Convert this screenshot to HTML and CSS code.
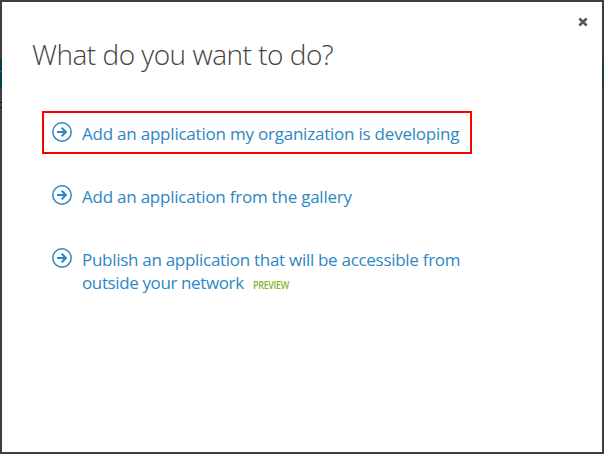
FILE: index.html
```
<!DOCTYPE html>
<html lang="en">
<head>
<meta charset="utf-8">
<title>What do you want to do?</title>
<link rel="stylesheet" href="styles.css">
</head>
<body>
<svg class="symbols" aria-hidden="true">
  <symbol id="go" viewBox="0 0 20 20">
    <circle cx="10" cy="10" r="9.2" fill="none" stroke="currentColor" stroke-width="1.5"/>
    <path d="M5 10h9M9.7 5.8l4.2 4.2-4.2 4.2" fill="none" stroke="currentColor" stroke-width="2.1"/>
  </symbol>
</svg>
<main class="backdrop">
  <section class="dialog" role="dialog">
    <button class="close" aria-label="Close">
      <svg viewBox="0 0 10 10"><path d="M1.3 1.5l7.4 7M8.7 1.5l-7.4 7" fill="none" stroke="currentColor" stroke-width="2.5"/></svg>
    </button>
    <h1 class="title">What do you want to do?</h1>
    <nav class="options">
      <a class="option highlighted"><svg class="icon"><use href="#go"/></svg><span class="label dev">Add an application my organization is developing</span></a>
      <a class="option"><svg class="icon"><use href="#go"/></svg><span class="label gallery">Add an application from the gallery</span></a>
      <a class="option"><svg class="icon"><use href="#go"/></svg><span class="label"><span class="publish">Publish an application that will be accessible from</span><br><span class="outside">outside your network</span><span class="badge">PREVIEW</span></span></a>
    </nav>
  </section>
</main>
</body>
</html>
```
FILE: styles.css
```
* { box-sizing: border-box; }
body { margin: 0; font-family: "Open Sans", "Noto Sans", sans-serif; }
.symbols { display: none; }
.backdrop {
  width: 604px;
  height: 454px;
  padding: 2px;
  background:
    linear-gradient(transparent 58px, #0c3d52 58px 71px, #2a6278 71px 72px, #0c3d52 72px 88px, transparent 88px 102px, #111 102px 103px, transparent 103px 107px, #111 107px 108px, transparent 108px) left / 2px 100% no-repeat,
    linear-gradient(#403f40 0 58px, #203d45 58px 88px, #403f40 88px);
}
.dialog { position: relative; height: 450px; background: #fff; padding: 30px 40px 0; }
.close {
  position: absolute;
  top: 15px;
  right: 14px;
  width: 10px;
  height: 10px;
  padding: 0;
  border: 0;
  background: none;
  color: #555;
}
.close svg { display: block; width: 10px; height: 10px; }
.title {
  margin: 0 0 0 -10px;
  height: 79px;
  font-size: 28px;
  line-height: 44px;
  font-weight: 300;
  letter-spacing: -0.5px;
  color: #444;
  white-space: nowrap;
}
.options { display: flex; flex-direction: column; gap: 20px; color: #2d87c3; }
.option {
  display: flex;
  width: 430px;
  min-height: 43px;
  padding: 9px 8px 7px;
  gap: 10px;
  border: 2px solid transparent;
}
.highlighted { border-color: #f00; }
.icon { flex: none; width: 20px; height: 20px; }
.label { font-size: 17px; line-height: 23px; white-space: nowrap; }
.dev { letter-spacing: -0.22px; }
.gallery { letter-spacing: -0.23px; }
.publish { letter-spacing: -0.29px; }
.outside { letter-spacing: -0.38px; }
.badge {
  display: inline-block;
  margin-left: 9px;
  font-size: 10.5px;
  line-height: 1;
  font-weight: 600;
  letter-spacing: -0.4px;
  transform: scaleX(0.86);
  transform-origin: left;
  color: #7db72f;
}
```
